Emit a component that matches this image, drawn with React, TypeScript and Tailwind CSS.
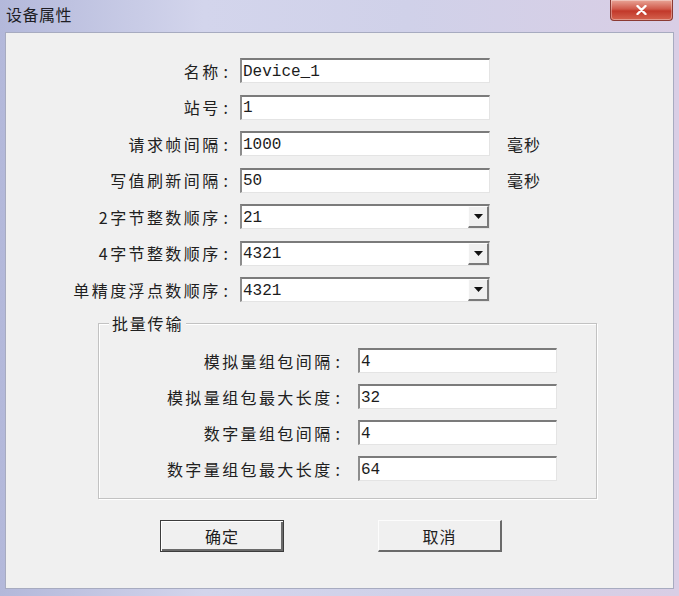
const cjk = "font-['Noto_Sans_CJK_SC','Noto_Sans',sans-serif]";

const mainRows: { label: string; value: string; combo?: boolean; unit?: string }[] = [
  { label: "名称", value: "Device_1" },
  { label: "站号", value: "1" },
  { label: "请求帧间隔", value: "1000", unit: "毫秒" },
  { label: "写值刷新间隔", value: "50", unit: "毫秒" },
  { label: "2字节整数顺序", value: "21", combo: true },
  { label: "4字节整数顺序", value: "4321", combo: true },
  { label: "单精度浮点数顺序", value: "4321", combo: true },
];

const batchRows = [
  { label: "模拟量组包间隔", value: "4" },
  { label: "模拟量组包最大长度", value: "32" },
  { label: "数字量组包间隔", value: "4" },
  { label: "数字量组包最大长度", value: "64" },
];

function Label({ text, width }: { text: string; width: string }) {
  return (
    <span className={`${width} pr-[7px] text-right whitespace-nowrap`}>
      <span className="tracking-[2.4px]">{text}</span>
      <span className="ml-[3px]">:</span>
    </span>
  );
}

function Field({ value, width, combo }: { value: string; width: string; combo?: boolean }) {
  return (
    <div
      className={`${width} flex h-[25px] items-center border-t-2 border-l-2 border-r border-b border-t-[#7b7b7b] border-l-[#8c8c8c] border-r-[#e4e4e4] border-b-[#e4e4e4] bg-white`}
    >
      <span className="flex-1 truncate pt-[1px] pl-[1px] font-['Liberation_Mono',monospace] text-[16px] leading-none text-[#1c1c1c]">
        {value}
      </span>
      {combo && (
        <div className="flex h-full w-[21px] items-center justify-center border-t border-l border-r-2 border-b-2 border-t-[#fdfdfd] border-l-[#fdfdfd] border-r-[#7a7a7a] border-b-[#7a7a7a] bg-[#f0f0f0]">
          <svg width="9" height="5" viewBox="0 0 9 5">
            <path d="M0 0h9L4.5 5z" fill="#111" />
          </svg>
        </div>
      )}
    </div>
  );
}

export default function App() {
  return (
    <div className="flex h-[596px] w-[679px] flex-col bg-[linear-gradient(90deg,#b3b8da,#d3d5ec_30%,#d0d1e9_60%,#d9cee5)]">
      <div className="relative flex h-[32px] items-start">
        <span className={`${cjk} mt-[5px] ml-[6px] text-[16px] leading-[18px] tracking-[0.5px] text-[#1e1e24]`}>设备属性</span>
        <div className="absolute top-0 right-[6px] flex h-[21px] w-[63px] items-center justify-center rounded-b-[4px] border border-t-0 border-[#8b3a33] bg-[linear-gradient(180deg,#e9a597,#d0594a_45%,#c2382a_55%,#d4634f)] shadow-[inset_0_0_0_1px_rgba(255,255,255,0.35)]">
          <svg width="11" height="10" viewBox="0 0 11 10">
            <path d="M1.5 1l8 8M9.5 1l-8 8" stroke="#fff" strokeWidth="2.4" strokeLinecap="round" />
          </svg>
        </div>
      </div>

      <div className={`${cjk} mx-[5px] h-[557px] border border-[#a7abc0] bg-[#f0f0f0] pt-[25px] text-[16px] text-[#202020]`}>
        <div className="flex flex-col gap-[11.5px]">
          {mainRows.map((r) => (
            <div key={r.label} className="flex items-center">
              <Label text={r.label} width="w-[229px]" />
              <div className="ml-[5px]">
                <Field value={r.value} width="w-[250px]" combo={r.combo} />
              </div>
              {r.unit && <span className="ml-[17px] tracking-[1px]">{r.unit}</span>}
            </div>
          ))}
        </div>

        <div className="relative mt-[21px] ml-[92px] w-[499px] border border-[#c2c2c2] pt-[24px] pb-[17px] shadow-[inset_1px_1px_0_#fff,1px_1px_0_#fff]">
          <span className="absolute -top-[12px] left-[10px] bg-[#f0f0f0] px-[3px] leading-[22px] tracking-[1.8px]">
            批量传输
          </span>
          <div className="flex flex-col gap-[11px]">
            {batchRows.map((r) => (
              <div key={r.label} className="flex items-center">
                <Label text={r.label} width="w-[248px]" />
                <div className="ml-[11px]">
                  <Field value={r.value} width="w-[199px]" />
                </div>
              </div>
            ))}
          </div>
        </div>

        <div className="mt-[21px] flex">
          <button className="ml-[154px] flex h-[32px] w-[124px] items-center justify-center border border-[#3c3c3c] bg-[#f0f0f0] shadow-[inset_1px_1px_0_#fff,inset_-2px_-2px_0_#6a6a6a] tracking-[1px]">
            确定
          </button>
          <button className="ml-[94px] flex h-[32px] w-[124px] items-center justify-center border-t border-l border-r-2 border-b-2 border-t-[#fcfcfc] border-l-[#fcfcfc] border-r-[#6a6a6a] border-b-[#6a6a6a] bg-[#f0f0f0] tracking-[1px]">
            取消
          </button>
        </div>
      </div>
    </div>
  );
}
